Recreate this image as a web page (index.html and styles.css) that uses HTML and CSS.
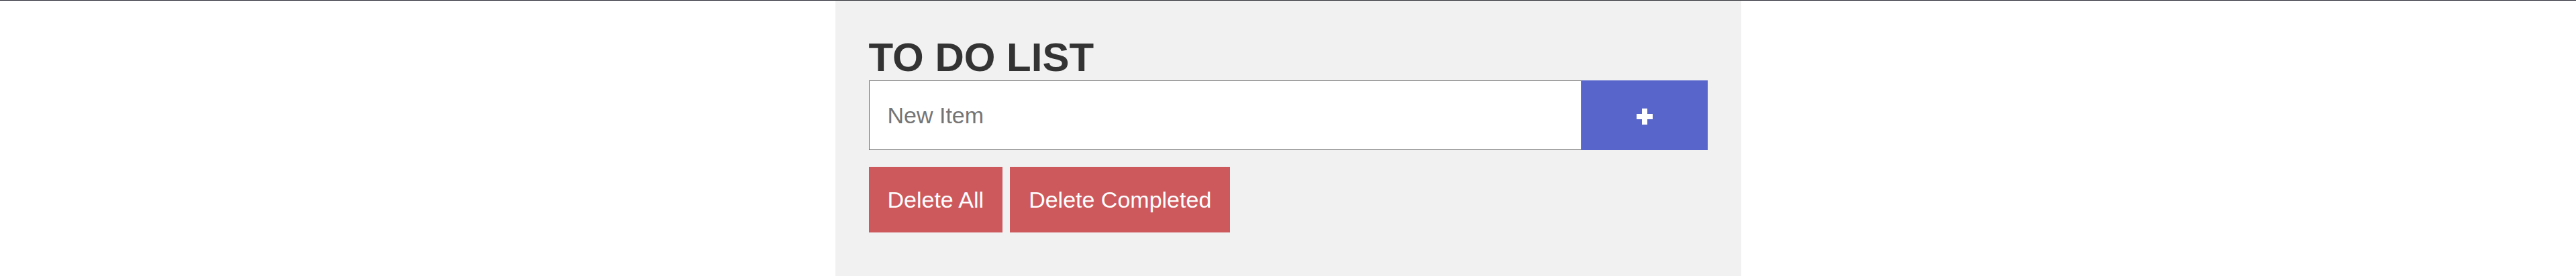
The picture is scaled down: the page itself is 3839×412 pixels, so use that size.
FILE: index.html
```html
<!DOCTYPE html>
<html lang="en">
<head>
<meta charset="utf-8">
<title>To Do List</title>
<link rel="stylesheet" href="styles.css">
</head>
<body>
  <main class="todo">
    <h1 class="todo-title">TO DO LIST</h1>
    <form class="todo-form" onsubmit="return false">
      <input class="todo-input" type="text" placeholder="New Item">
      <button class="add-btn" type="submit" aria-label="Add">
        <svg class="plus-icon" width="24" height="24" viewBox="0 0 24 24" aria-hidden="true">
          <path d="M8 0h8v8h8v8h-8v8h-8v-8h-8v-8h8z" fill="#ffffff"/>
        </svg>
      </button>
    </form>
    <div class="actions">
      <button class="danger-btn" type="button">Delete All</button>
      <button class="danger-btn" type="button">Delete Completed</button>
    </div>
  </main>
</body>
</html>
```
FILE: styles.css
```css
html, body {
  margin: 0;
  padding: 0;
  background: #ffffff;
}

body {
  border-top: 1px solid #2c2c36;
  font-family: "Liberation Sans", Arial, sans-serif;
}

.todo {
  box-sizing: border-box;
  width: 1350px;
  min-height: calc(100vh - 1px);
  margin: 0 auto;
  padding: 50px;
  background: #f1f1f2;
}

.todo-title {
  margin: 0;
  font-size: 60px;
  font-weight: bold;
  color: #333333;
  line-height: normal;
}

.todo-form {
  display: flex;
  height: 104px;
  margin: 0;
}

.todo-input {
  flex: 1;
  box-sizing: border-box;
  height: 104px;
  margin: 0;
  border: 1px solid #7a7a7a;
  padding: 0 27px;
  font-family: "Liberation Sans", Arial, sans-serif;
  font-size: 34px;
  color: #333333;
  background: #ffffff;
  outline: none;
}

.todo-input::placeholder {
  color: #757575;
}

.add-btn {
  width: 188px;
  height: 104px;
  border: none;
  margin: 0;
  padding: 4px 0 0;
  background: #5866cb;
  display: flex;
  align-items: center;
  justify-content: center;
  cursor: pointer;
}

.plus-icon {
  display: block;
}

.actions {
  display: flex;
  gap: 11px;
  margin-top: 25px;
}

.danger-btn {
  height: 98px;
  border: none;
  margin: 0;
  padding: 0 28px;
  background: #cd595d;
  color: #ffffff;
  font-family: "Liberation Sans", Arial, sans-serif;
  font-size: 34px;
  cursor: pointer;
}
```
